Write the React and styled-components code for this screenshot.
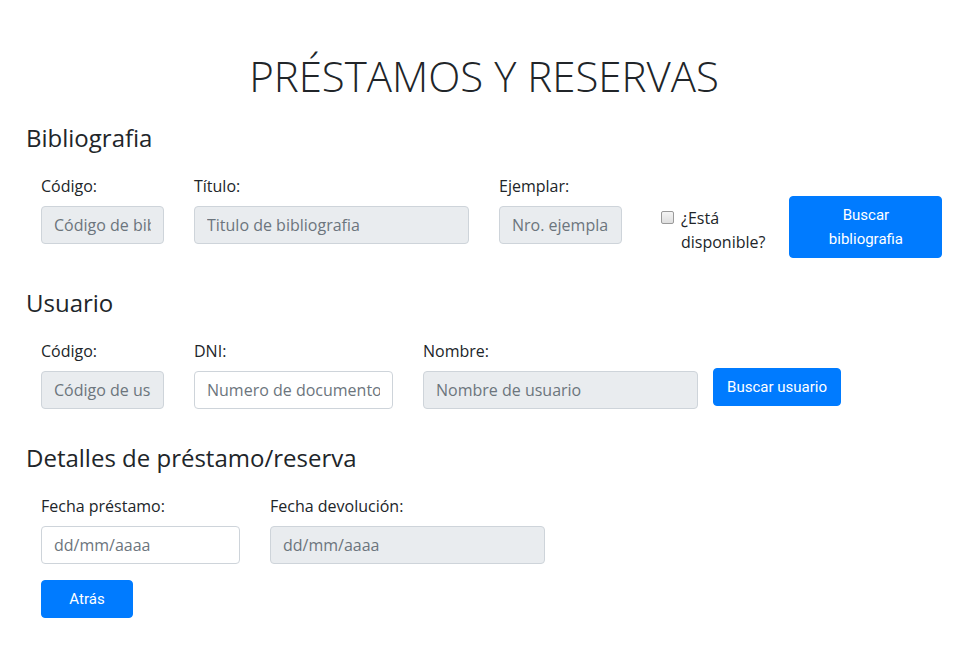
import React from "react";
import styled, { createGlobalStyle } from "styled-components";

const GlobalStyle = createGlobalStyle`
  html, body { margin: 0; padding: 0; background: #fff; }
  body {
    font-family: "Open Sans", "Noto Sans", sans-serif;
    font-size: 16px;
    line-height: 1.5;
    color: #212529;
  }
  * { box-sizing: border-box; }
`;

const Page = styled.main`
  padding: 51px 20px 30px 26px;
`;

const Title = styled.h1`
  margin: 0 0 23px;
  text-align: center;
  font-size: 42px;
  font-weight: 300;
  line-height: 1.2;
  color: #212529;
`;

const Sections = styled.div`
  display: flex;
  flex-direction: column;
  gap: 19px;
`;

const Section = styled.section`
  display: flex;
  flex-direction: column;
`;

const SectionTitle = styled.h4`
  margin: 0 0 21px;
  font-size: 24px;
  font-weight: 400;
  line-height: 1.2;
`;

const FormRow = styled.div`
  display: flex;
  align-items: flex-start;
  padding-left: 15px;
  gap: ${(p) => p.$gap ?? 30}px;
`;

const FormGroup = styled.div`
  display: flex;
  flex-direction: column;
  flex: none;
  width: ${(p) => p.$width}px;
  margin-bottom: 16px;
`;

const Label = styled.label`
  display: block;
  margin-bottom: 8px;
  font-size: 16px;
  line-height: 24px;
`;

const Input = styled.input`
  display: block;
  width: 100%;
  height: 38px;
  padding: 6px 12px;
  font-family: "Open Sans", "Noto Sans", sans-serif;
  font-size: 16px;
  line-height: 1.5;
  color: #495057;
  background: ${(p) => (p.readOnly ? "#e9ecef" : "#fff")};
  border: 1px solid #ced4da;
  border-radius: 4px;
  outline: none;
  &::placeholder {
    color: #6c757d;
    opacity: 1;
  }
`;

const CheckGroup = styled.div`
  display: flex;
  flex: none;
  align-items: flex-start;
  padding-top: 32px;
  margin-left: 9px;
  margin-bottom: 16px;
`;

const CheckBox = styled.input.attrs({ type: "checkbox" })`
  appearance: none;
  width: 13px;
  height: 13px;
  margin: 5px 7px 0 0;
  flex: none;
  border: 1px solid #9a9a9a;
  border-radius: 2px;
  background: linear-gradient(#f4f4f4, #dedede);
`;

const CheckLabel = styled.label`
  width: min-content;
  font-size: 16px;
  line-height: 24px;
`;

const Button = styled.button`
  flex: none;
  width: ${(p) => p.$width}px;
  margin-top: ${(p) => p.$offset ?? 0}px;
  margin-left: ${(p) => p.$left ?? 0}px;
  padding: 6px ${(p) => p.$padX ?? 12}px;
  font-family: Roboto, "Open Sans", sans-serif;
  font-size: 15px;
  font-weight: 400;
  line-height: 24px;
  color: #fff;
  background: #007bff;
  border: 1px solid #007bff;
  border-radius: 4px;
  text-align: center;
  cursor: pointer;
`;

const Field = ({ label, width, placeholder, readOnly }) => (
  <FormGroup $width={width}>
    <Label>{label}</Label>
    <Input placeholder={placeholder} readOnly={readOnly} />
  </FormGroup>
);

export default function App() {
  return (
    <>
      <GlobalStyle />
      <Page>
        <Title>PRÉSTAMOS Y RESERVAS</Title>
        <Sections>
          <Section>
            <SectionTitle>Bibliografia</SectionTitle>
            <FormRow>
              <Field label="Código:" width={123} placeholder="Código de bibliografia" readOnly />
              <Field label="Título:" width={275} placeholder="Titulo de bibliografia" readOnly />
              <Field label="Ejemplar:" width={123} placeholder="Nro. ejemplar" readOnly />
              <CheckGroup>
                <CheckBox id="disp" />
                <CheckLabel htmlFor="disp">¿Está disponible?</CheckLabel>
              </CheckGroup>
              <Button $width={153} $offset={22} $padX={24} $left={-6}>
                Buscar bibliografia
              </Button>
            </FormRow>
          </Section>
          <Section>
            <SectionTitle>Usuario</SectionTitle>
            <FormRow>
              <Field label="Código:" width={123} placeholder="Código de usuario" readOnly />
              <Field label="DNI:" width={199} placeholder="Numero de documento" />
              <Field label="Nombre:" width={275} placeholder="Nombre de usuario" readOnly />
              <Button $width={128} $offset={29} $left={-15}>
                Buscar usuario
              </Button>
            </FormRow>
          </Section>
          <Section>
            <SectionTitle>Detalles de préstamo/reserva</SectionTitle>
            <FormRow>
              <Field label="Fecha préstamo:" width={199} placeholder="dd/mm/aaaa" />
              <Field label="Fecha devolución:" width={275} placeholder="dd/mm/aaaa" readOnly />
            </FormRow>
            <FormRow>
              <Button $width={92}>Atrás</Button>
            </FormRow>
          </Section>
        </Sections>
      </Page>
    </>
  );
}
